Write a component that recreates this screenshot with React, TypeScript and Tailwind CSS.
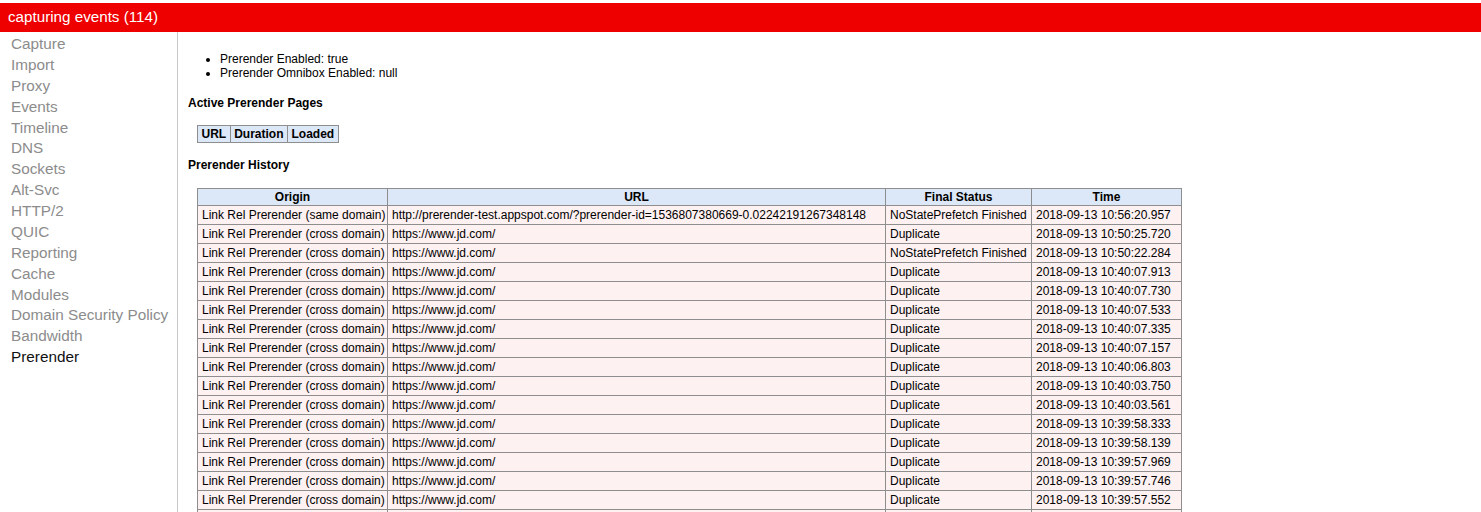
import React from 'react';

const tabs = [
  'Capture',
  'Import',
  'Proxy',
  'Events',
  'Timeline',
  'DNS',
  'Sockets',
  'Alt-Svc',
  'HTTP/2',
  'QUIC',
  'Reporting',
  'Cache',
  'Modules',
  'Domain Security Policy',
  'Bandwidth',
  'Prerender',
];

const JD = 'https://www.jd.com/';
const CROSS = 'Link Rel Prerender (cross domain)';

const history = [
  {
    origin: 'Link Rel Prerender (same domain)',
    url: 'http://prerender-test.appspot.com/?prerender-id=1536807380669-0.02242191267348148',
    status: 'NoStatePrefetch Finished',
    time: '2018-09-13 10:56:20.957',
  },
  { origin: CROSS, url: JD, status: 'Duplicate', time: '2018-09-13 10:50:25.720' },
  { origin: CROSS, url: JD, status: 'NoStatePrefetch Finished', time: '2018-09-13 10:50:22.284' },
  { origin: CROSS, url: JD, status: 'Duplicate', time: '2018-09-13 10:40:07.913' },
  { origin: CROSS, url: JD, status: 'Duplicate', time: '2018-09-13 10:40:07.730' },
  { origin: CROSS, url: JD, status: 'Duplicate', time: '2018-09-13 10:40:07.533' },
  { origin: CROSS, url: JD, status: 'Duplicate', time: '2018-09-13 10:40:07.335' },
  { origin: CROSS, url: JD, status: 'Duplicate', time: '2018-09-13 10:40:07.157' },
  { origin: CROSS, url: JD, status: 'Duplicate', time: '2018-09-13 10:40:06.803' },
  { origin: CROSS, url: JD, status: 'Duplicate', time: '2018-09-13 10:40:03.750' },
  { origin: CROSS, url: JD, status: 'Duplicate', time: '2018-09-13 10:40:03.561' },
  { origin: CROSS, url: JD, status: 'Duplicate', time: '2018-09-13 10:39:58.333' },
  { origin: CROSS, url: JD, status: 'Duplicate', time: '2018-09-13 10:39:58.139' },
  { origin: CROSS, url: JD, status: 'Duplicate', time: '2018-09-13 10:39:57.969' },
  { origin: CROSS, url: JD, status: 'Duplicate', time: '2018-09-13 10:39:57.746' },
  { origin: CROSS, url: JD, status: 'Duplicate', time: '2018-09-13 10:39:57.552' },
];

const th = 'border border-[#8e8e8e] bg-[#dce7f7] px-[4px] py-[1px] leading-[14px] font-bold text-center';
const smallTh = 'border border-[#8e8e8e] bg-[#dce7f7] px-[3.5px] py-[1px] leading-[14px] font-bold text-center';
const td = 'border border-[#8e8e8e] bg-[#fdf1f1] px-[4px] py-[2px] leading-[14px] text-left whitespace-nowrap';

const App = () => {
  return (
    <div className="min-h-[512px] bg-white pt-[3px] font-['Liberation_Sans',Arial,sans-serif] text-black">
      <div className="flex h-[29px] items-center bg-[#ee0000] pl-[8px] text-[15.2px] text-white">
        capturing events (114)
      </div>
      <div className="flex">
        <div className="min-h-[480px] w-[178px] shrink-0 border-r border-[#c8c8c8] pt-[2px]">
          {tabs.map((t) => (
            <div
              key={t}
              className={`pl-[11px] text-[15.3px] leading-[20.87px] ${
                t === 'Prerender' ? 'text-[#111111]' : 'text-[#8c8c8c]'
              }`}
            >
              {t}
            </div>
          ))}
        </div>

        <div className="flex-1 pl-[10px] pt-[20px] text-[12px]">
          <ul className="list-disc pl-[32px] leading-[14px]">
            <li>Prerender Enabled: true</li>
            <li>Prerender Omnibox Enabled: null</li>
          </ul>

          <h4 className="mt-[16px] font-bold leading-[14px]">Active Prerender Pages</h4>
          <table className="ml-[9px] mt-[15px] border-collapse">
            <thead>
              <tr>
                <th className={smallTh}>URL</th>
                <th className={smallTh}>Duration</th>
                <th className={smallTh}>Loaded</th>
              </tr>
            </thead>
          </table>

          <h4 className="mt-[15px] font-bold leading-[14px]">Prerender History</h4>
          <table className="ml-[9px] mt-[16px] w-[984px] table-fixed border-collapse">
            <colgroup>
              <col className="w-[190px]" />
              <col className="w-[498px]" />
              <col className="w-[146px]" />
              <col className="w-[150px]" />
            </colgroup>
            <thead>
              <tr>
                <th className={th}>Origin</th>
                <th className={th}>URL</th>
                <th className={th}>Final Status</th>
                <th className={th}>Time</th>
              </tr>
            </thead>
            <tbody>
              {history.map((r, i) => (
                <tr key={i}>
                  <td className={td}>{r.origin}</td>
                  <td className={td}>{r.url}</td>
                  <td className={td}>{r.status}</td>
                  <td className={td}>{r.time}</td>
                </tr>
              ))}
              <tr>
                <td className={td}>&nbsp;</td>
                <td className={td}>&nbsp;</td>
                <td className={td}>&nbsp;</td>
                <td className={td}>&nbsp;</td>
              </tr>
            </tbody>
          </table>
        </div>
      </div>
    </div>
  );
};

export default App;
